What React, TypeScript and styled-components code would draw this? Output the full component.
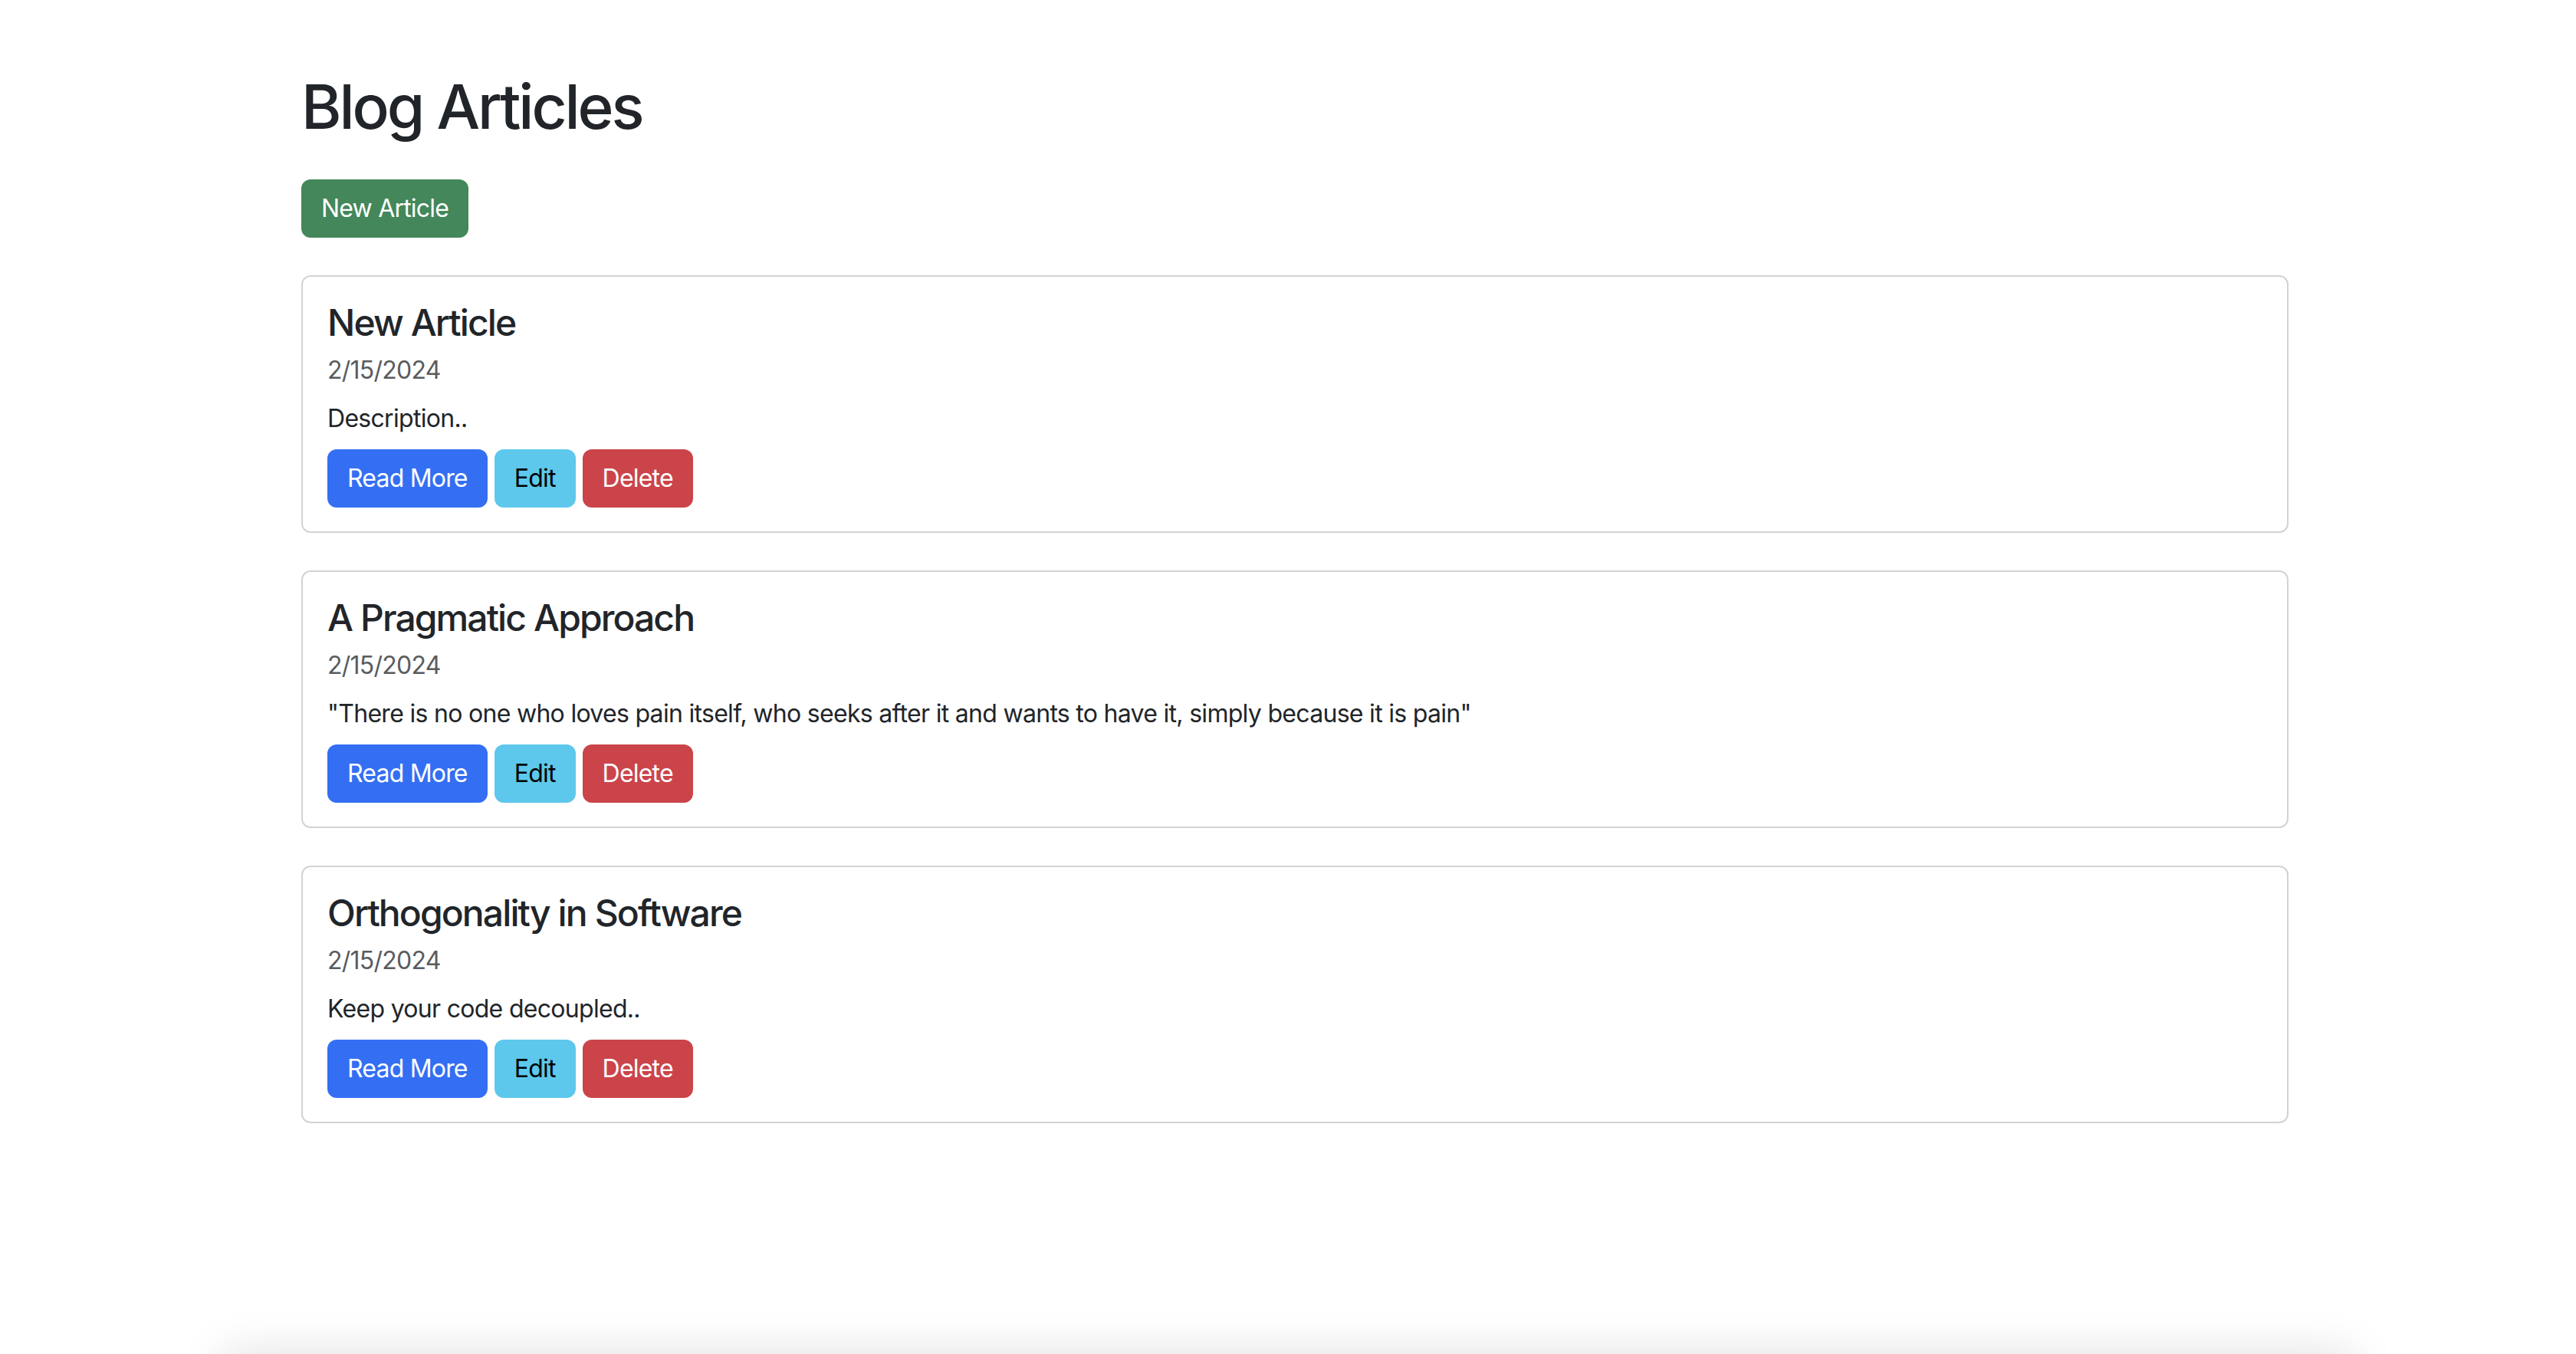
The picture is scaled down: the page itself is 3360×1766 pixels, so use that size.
import React from "react";
import styled, { createGlobalStyle } from "styled-components";

const GlobalStyle = createGlobalStyle`
  html, body {
    margin: 0;
    padding: 0;
    background: #ffffff;
  }
  body {
    font-family: Inter, "Liberation Sans", Arial, sans-serif;
    color: #212529;
    overflow: hidden;
  }
  * { box-sizing: border-box; }
`;

const Page = styled.main`
  width: 2592px;
  margin-left: 393px;
  padding-top: 91px;
`;

const Heading = styled.h1`
  margin: 0 0 47px 0;
  font-size: 80px;
  line-height: 96px;
  font-weight: 500;
  color: #212529;
  letter-spacing: -3.1px;
`;

type Variant = "success" | "primary" | "info" | "danger";

const palette: Record<Variant, { bg: string; fg: string }> = {
  success: { bg: "#43875a", fg: "#ffffff" },
  primary: { bg: "#346ff3", fg: "#ffffff" },
  info: { bg: "#5dc8ec", fg: "#000000" },
  danger: { bg: "#cb444a", fg: "#ffffff" },
};

const Button = styled.button<{ $variant: Variant }>`
  display: inline-flex;
  align-items: center;
  height: 76px;
  padding: 12px 24px;
  border: 2px solid ${(p) => palette[p.$variant].bg};
  border-radius: 12px;
  background: ${(p) => palette[p.$variant].bg};
  color: ${(p) => palette[p.$variant].fg};
  font-family: inherit;
  font-size: 32px;
  line-height: 48px;
  font-weight: 400;
  letter-spacing: -0.8px;
  cursor: pointer;
`;

const TopBar = styled.div`
  display: flex;
  margin-bottom: 49px;
`;

const List = styled.div`
  display: flex;
  flex-direction: column;
  gap: 49px;
`;

const Card = styled.article`
  border: 2px solid #d3d3d3;
  border-radius: 12px;
  padding: 31px 32px;
  background: #ffffff;
`;

const Title = styled.h4`
  margin: 0 0 14px 0;
  font-size: 48px;
  line-height: 58px;
  font-weight: 500;
  letter-spacing: -1.9px;
  color: #212529;
`;

const DateLine = styled.h6`
  margin: 0 0 20px 0;
  font-size: 32px;
  line-height: 38px;
  font-weight: 400;
  letter-spacing: -0.75px;
  color: #595c5f;
`;

const Text = styled.p`
  margin: 0 0 16px 0;
  font-size: 32px;
  line-height: 48px;
  letter-spacing: -0.7px;
  color: #212529;
`;

const Actions = styled.div`
  display: flex;
  gap: 9px;
`;

const BottomShade = styled.div`
  position: fixed;
  left: 290px;
  right: 290px;
  top: 100%;
  height: 120px;
  background: #ffffff;
  box-shadow: 0 0 60px rgba(0, 0, 0, 0.13);
  pointer-events: none;
`;

const articles = [
  { title: "New Article", date: "2/15/2024", text: "Description.." },
  {
    title: "A Pragmatic Approach",
    date: "2/15/2024",
    text: '"There is no one who loves pain itself, who seeks after it and wants to have it, simply because it is pain"',
  },
  { title: "Orthogonality in Software", date: "2/15/2024", text: "Keep your code decoupled.." },
];

export default function App() {
  return (
    <>
      <GlobalStyle />
      <Page>
        <Heading>Blog Articles</Heading>
        <TopBar>
          <Button $variant="success">New Article</Button>
        </TopBar>
        <List>
          {articles.map((a) => (
            <Card key={a.title}>
              <Title>{a.title}</Title>
              <DateLine>{a.date}</DateLine>
              <Text>{a.text}</Text>
              <Actions>
                <Button $variant="primary">Read More</Button>
                <Button $variant="info">Edit</Button>
                <Button $variant="danger">Delete</Button>
              </Actions>
            </Card>
          ))}
        </List>
      </Page>
      <BottomShade />
    </>
  );
}
